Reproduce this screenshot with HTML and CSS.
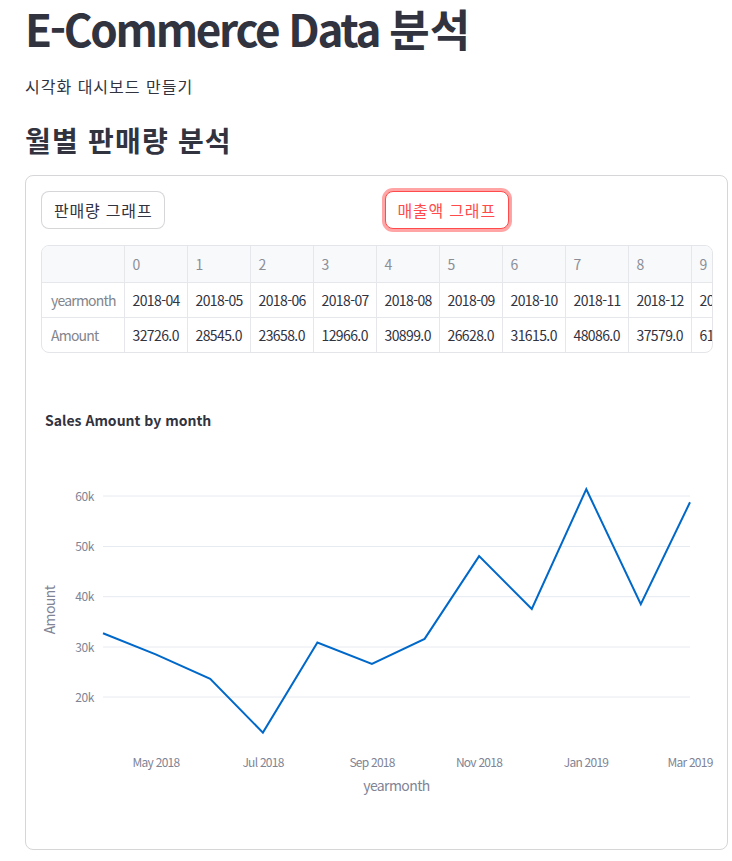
FILE: index.html
```html
<!DOCTYPE html>
<html lang="ko">
<head>
<meta charset="utf-8">
<title>E-Commerce Data 분석</title>
<link rel="stylesheet" href="styles.css">
</head>
<body>
<main class="main">
  <h1 class="title"><span class="latin">E-Commerce Data </span><span class="ko">분석</span></h1>
  <p class="subtitle">시각화 대시보드 만들기</p>
  <h3 class="subheader">월별 판매량 분석</h3>
  <section class="card">
    <div class="btn-row">
      <div class="col"><button class="btn">판매량 그래프</button></div>
      <div class="col"><button class="btn btn-active">매출액 그래프</button></div>
    </div>
    <div class="grid-wrap">
      <table class="grid">
        <colgroup>
          <col class="c-idx">
          <col class="c-d"><col class="c-d"><col class="c-d"><col class="c-d"><col class="c-d">
          <col class="c-d"><col class="c-d"><col class="c-d"><col class="c-d"><col class="c-d">
        </colgroup>
        <thead>
          <tr><th></th><th>0</th><th>1</th><th>2</th><th>3</th><th>4</th><th>5</th><th>6</th><th>7</th><th>8</th><th>9</th></tr>
        </thead>
        <tbody>
          <tr><th>yearmonth</th><td>2018-04</td><td>2018-05</td><td>2018-06</td><td>2018-07</td><td>2018-08</td><td>2018-09</td><td>2018-10</td><td>2018-11</td><td>2018-12</td><td>20</td></tr>
          <tr><th>Amount</th><td>32726.0</td><td>28545.0</td><td>23658.0</td><td>12966.0</td><td>30899.0</td><td>26628.0</td><td>31615.0</td><td>48086.0</td><td>37579.0</td><td>61</td></tr>
        </tbody>
      </table>
    </div>
    <svg class="chart" viewBox="0 0 672 466" width="672" height="466" xmlns="http://www.w3.org/2000/svg">
      <text class="ch-title" x="4" y="59">Sales Amount by month</text>
      <g class="grid-lines">
        <line x1="62" x2="649" y1="129" y2="129"/>
        <line x1="62" x2="649" y1="179.5" y2="179.5"/>
        <line x1="62" x2="649" y1="229.7" y2="229.7"/>
        <line x1="62" x2="649" y1="280" y2="280"/>
        <line x1="62" x2="649" y1="330" y2="330"/>
      </g>
      <g class="ytick">
        <text x="53" y="133.5">60k</text>
        <text x="53" y="184">50k</text>
        <text x="53" y="234">40k</text>
        <text x="53" y="284.5">30k</text>
        <text x="53" y="334.5">20k</text>
      </g>
      <g class="xtick">
        <text x="115" y="400">May 2018</text>
        <text x="222" y="400">Jul 2018</text>
        <text x="331" y="400">Sep 2018</text>
        <text x="438" y="400">Nov 2018</text>
        <text x="545" y="400">Jan 2019</text>
        <text x="649" y="400">Mar 2019</text>
      </g>
      <text class="axis-title" x="355.5" y="424" text-anchor="middle">yearmonth</text>
      <text class="axis-title" transform="translate(14 243) rotate(-90)" text-anchor="middle">Amount</text>
      <polyline class="series" points="62,266.3 114.7,287.3 169.2,311.9 221.9,365.6 276.4,275.5 330.9,296.9 383.6,271.9 438.1,189.1 490.8,241.9 545.3,122.2 599.8,237.3 649,135.3"/>
    </svg>
  </section>
</main>
</body>
</html>
```
FILE: styles.css
```css
* { box-sizing: border-box; }
body {
  margin: 0;
  background: #ffffff;
  color: #31333f;
  font-family: "Noto Sans CJK KR", "Noto Sans", sans-serif;
}
.main {
  padding: 0 4px 0 25px;
}
.title {
  margin: 0;
  font-size: 44px;
  font-weight: 700;
  line-height: 1.3;
  white-space: nowrap;
}
.title .latin { letter-spacing: -2.3px; }
.title .ko { letter-spacing: 0; }
.subtitle {
  margin: 17px 0 0 0;
  font-size: 16px;
  line-height: 1.6;
  letter-spacing: 1px;
}
.subheader {
  margin: 24px 0 0 0;
  font-size: 28px;
  font-weight: 700;
  line-height: 1.2;
  letter-spacing: 1.2px;
}
.card {
  margin-top: 18px;
  border: 1px solid rgba(49, 51, 63, 0.2);
  border-radius: 8px;
  padding: 15px;
  height: 675px;
}
.btn-row {
  display: flex;
  gap: 16px;
}
.col { flex: 1 1 0; }
.btn {
  font-family: inherit;
  font-size: 16px;
  line-height: 1.6;
  letter-spacing: 0.8px;
  color: #31333f;
  background: #ffffff;
  border: 1px solid rgba(49, 51, 63, 0.2);
  border-radius: 8px;
  padding: 5.2px 12px;
  cursor: pointer;
}
.btn-active {
  color: #ff4b4b;
  border-color: #ff4b4b;
  box-shadow: 0 0 0 3px rgba(255, 75, 75, 0.5);
}
.grid-wrap {
  margin-top: 16px;
  border: 1px solid #e4e5e8;
  border-radius: 8px;
  overflow: hidden;
  width: 672px;
}
.grid {
  border-collapse: collapse;
  table-layout: fixed;
  width: 712px;
  font-size: 14px;
}
.c-idx { width: 82px; }
.c-d { width: 63px; }
.grid th, .grid td {
  height: 35px;
  padding: 0 0 0 8px;
  text-align: left;
  font-weight: 400;
  white-space: nowrap;
  overflow: hidden;
  letter-spacing: -0.6px;
  border-right: 1px solid #e6e7ea;
  border-bottom: 1px solid #e6e7ea;
}
.grid thead th { height: 36px; }
.grid tbody tr:last-child th, .grid tbody tr:last-child td { border-bottom: none; }
.grid thead th {
  background: #f8f9fb;
  color: #8c8e96;
}
.grid tbody th {
  color: #83858c;
  padding-left: 9px;
  letter-spacing: -0.8px;
}
.grid td { color: #31333f; }
.chart {
  display: block;
  margin-top: 14px;
  overflow: visible;
  font-family: "Noto Sans CJK KR", "Noto Sans", sans-serif;
}
.ch-title {
  font-size: 14px;
  font-weight: 700;
  fill: #31333f;
}
.grid-lines line {
  stroke: #e6eaf1;
  stroke-width: 1;
}
.ytick text {
  font-size: 12px;
  fill: #808495;
  text-anchor: end;
  letter-spacing: -0.4px;
}
.xtick text {
  font-size: 12px;
  fill: #808495;
  text-anchor: middle;
  letter-spacing: -0.75px;
}
.axis-title {
  font-size: 14px;
  fill: #808495;
  letter-spacing: -0.6px;
}
.series {
  fill: none;
  stroke: #0068c9;
  stroke-width: 2;
  stroke-linejoin: miter;
}
```
